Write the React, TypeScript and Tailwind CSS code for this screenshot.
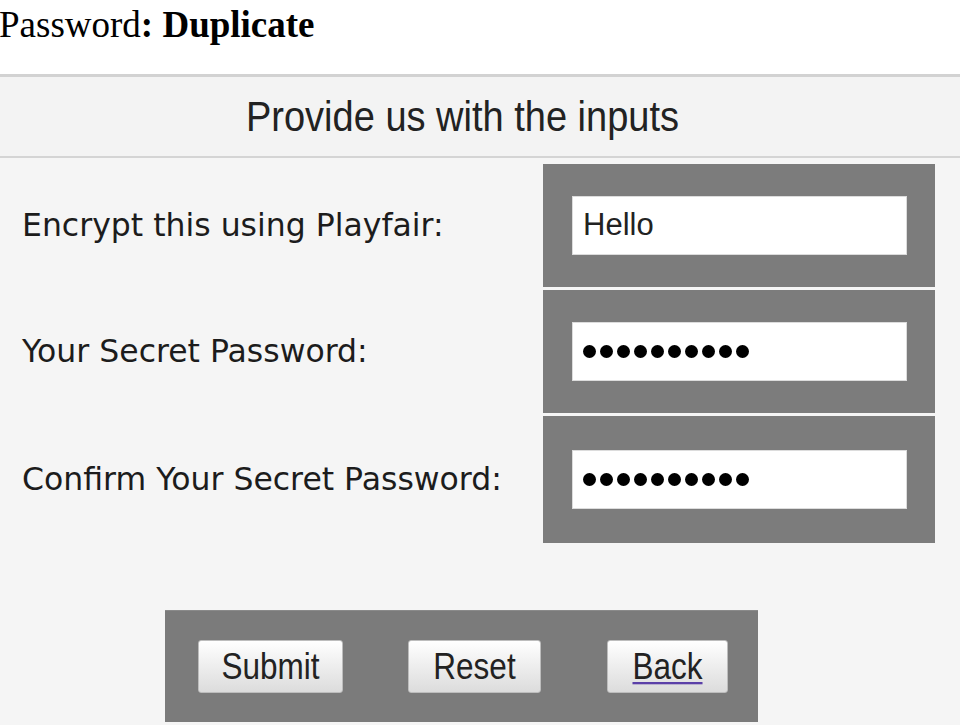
export default function App() {
  const rows = [
    { label: 'Encrypt this using Playfair:', value: 'Hello', secret: false, h: 'h-[123px]' },
    { label: 'Your Secret Password:', value: '', secret: true, h: 'h-[123px]' },
    { label: 'Confirm Your Secret Password:', value: '', secret: true, h: 'h-[127px]' },
  ]

  return (
    <div className="min-h-screen overflow-hidden bg-white">
      <p className="-ml-[1px] pt-[5px] font-['Liberation_Serif',serif] text-[37px] leading-[40px] text-black">
        Password<b>: Duplicate</b>
      </p>

      <div className="mt-[29px] w-[960px] border-t-[3px] border-[#d2d2d2] bg-[#f5f5f5] pb-[3px]">
        {/* header band */}
        <div className="flex h-[81px] items-center justify-center border-b-2 border-[#d4d4d4] bg-[#f3f3f3] pr-[35px]">
          <span className="inline-block scale-y-[1.12] font-['Liberation_Sans',Arial,sans-serif] text-[38px] text-[#222]">
            Provide us with the inputs
          </span>
        </div>

        <div className="pt-[6px]">
          {rows.map((r, i) => (
            <div key={r.label} className={`flex ${r.h} ${i > 0 ? 'mt-[3px]' : ''}`}>
              <div className="flex w-[543px] items-center pl-[22px] font-['DejaVu_Sans',sans-serif] text-[31.5px] text-[#1c1c1c]">
                {r.label}
              </div>
              <div className="flex w-[392px] items-center bg-[#7c7c7c] pl-[29px] pr-[28px]">
                <div className="flex h-[59px] w-full items-center border border-[#dcdcdc] bg-white pl-[10px]">
                  {r.secret ? (
                    <div className="flex gap-[4px]">
                      {Array.from({ length: 10 }).map((_, k) => (
                        <span key={k} className="h-[13px] w-[13px] rounded-full bg-black" />
                      ))}
                    </div>
                  ) : (
                    <span className="font-['Liberation_Sans',Arial,sans-serif] text-[31px] text-[#222]">
                      {r.value}
                    </span>
                  )}
                </div>
              </div>
            </div>
          ))}
        </div>

        {/* buttons */}
        <div className="ml-[165px] mt-[67px] flex h-[112px] w-[593px] items-center border-t border-[#8a8a8a] bg-[#7b7b7b]">
          <button className="ml-[33px] h-[53px] w-[145px] rounded-[3px] border border-[#bdbdbd] bg-linear-to-b from-white to-[#dcdcdc] font-['Liberation_Sans',Arial,sans-serif] text-[31.5px] text-[#222]">
            <span className="inline-block scale-y-[1.15]">Submit</span>
          </button>
          <button className="ml-[65px] h-[53px] w-[133px] rounded-[3px] border border-[#bdbdbd] bg-linear-to-b from-white to-[#dcdcdc] font-['Liberation_Sans',Arial,sans-serif] text-[31.5px] text-[#222]">
            <span className="inline-block scale-y-[1.15]">Reset</span>
          </button>
          <button className="ml-[66px] h-[53px] w-[121px] rounded-[3px] border border-[#bdbdbd] bg-linear-to-b from-white to-[#dcdcdc] font-['Liberation_Sans',Arial,sans-serif] text-[31.5px] text-[#222]">
            <span className="inline-block scale-y-[1.15] underline decoration-[#5b40a8] decoration-2 underline-offset-[3px]">
              Back
            </span>
          </button>
        </div>
      </div>
    </div>
  )
}
